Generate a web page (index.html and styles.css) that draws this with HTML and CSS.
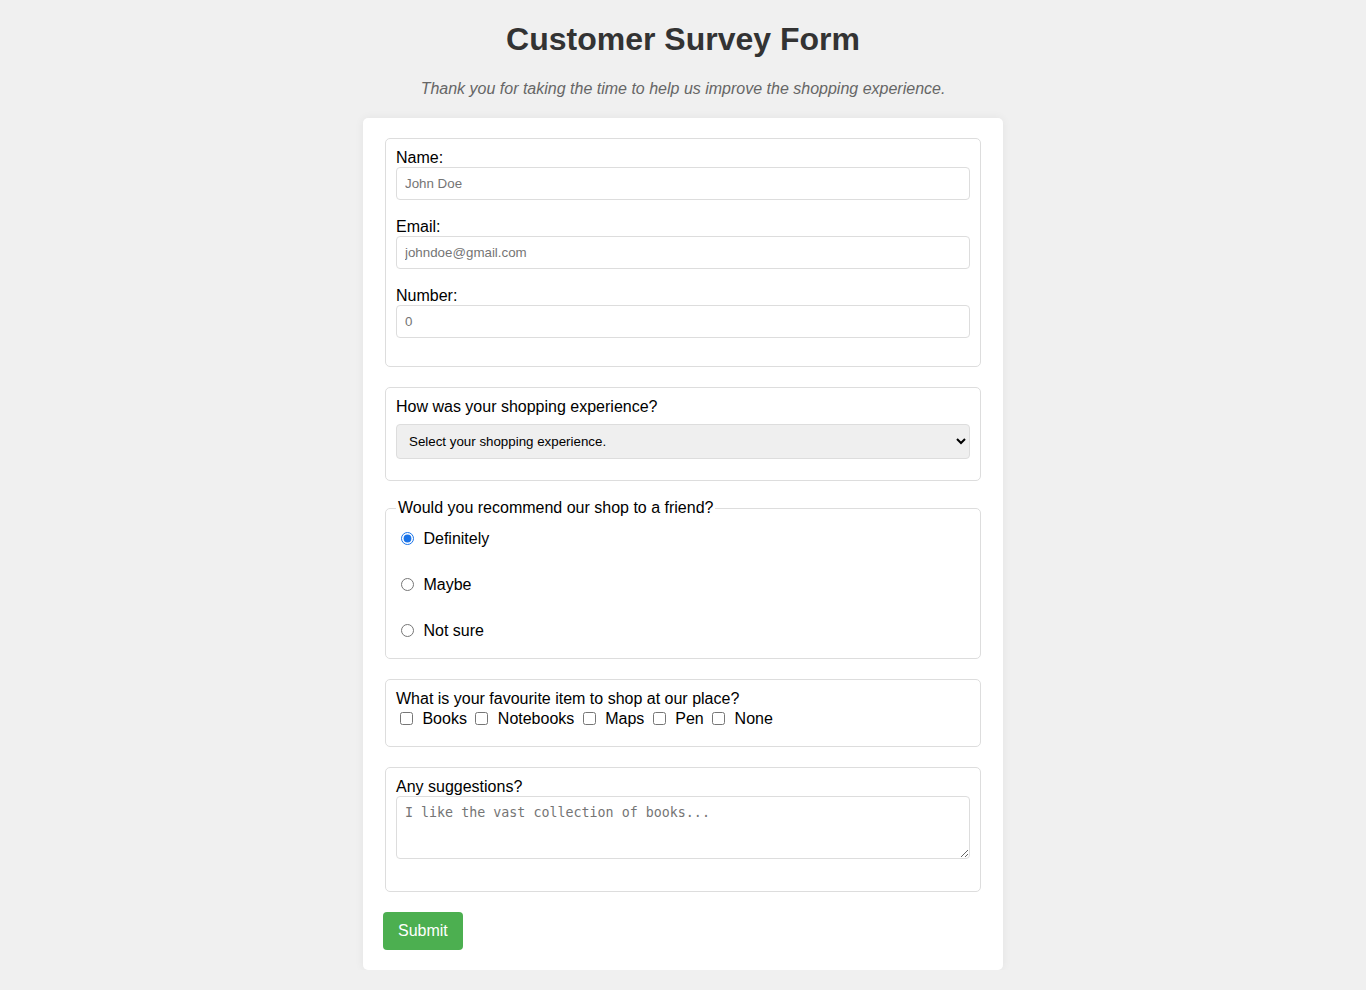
FILE: index.html
```html
<!DOCTYPE html>
<html lang="en">
<head>
<meta charset="utf-8">
<title>Customer Survey Form</title>
<link rel="stylesheet" href="styles.css">
</head>
<body>
<h1 class="title">Customer Survey Form</h1>
<p class="subtitle">Thank you for taking the time to help us improve the shopping experience.</p>
<form class="survey">
  <fieldset class="group">
    <label class="field-label" for="name">Name:</label>
    <input class="text-input" id="name" type="text" placeholder="John Doe">
    <label class="field-label" for="email">Email:</label>
    <input class="text-input" id="email" type="email" placeholder="johndoe@gmail.com">
    <label class="field-label" for="number">Number:</label>
    <input class="text-input" id="number" type="number" placeholder="0">
  </fieldset>

  <fieldset class="group">
    <label class="field-label spaced" for="exp">How was your shopping experience?</label>
    <select class="select-input" id="exp">
      <option>Select your shopping experience.</option>
    </select>
  </fieldset>

  <fieldset class="group legend-group">
    <legend class="legend">Would you recommend our shop to a friend?</legend>
    <div class="radios">
      <label class="option"><input class="radio" type="radio" name="rec" checked> Definitely</label>
      <label class="option"><input class="radio" type="radio" name="rec"> Maybe</label>
      <label class="option"><input class="radio" type="radio" name="rec"> Not sure</label>
    </div>
  </fieldset>

  <fieldset class="group checks-group">
    <div class="field-label">What is your favourite item to shop at our place?</div>
    <div class="checks"><label class="check"><input class="checkbox" type="checkbox"> Books</label> <label class="check"><input class="checkbox" type="checkbox"> Notebooks</label> <label class="check"><input class="checkbox" type="checkbox"> Maps</label> <label class="check"><input class="checkbox" type="checkbox"> Pen</label> <label class="check"><input class="checkbox" type="checkbox"> None</label></div>
  </fieldset>

  <fieldset class="group">
    <label class="field-label" for="sugg">Any suggestions?</label>
    <textarea class="textarea" id="sugg" placeholder="I like the vast collection of books..."></textarea>
  </fieldset>

  <button class="submit" type="button">Submit</button>
</form>
</body>
</html>
```

FILE: styles.css
```css
html, body {
  background: #f0f0f0;
}
body {
  margin: 0;
  font-family: "Liberation Sans", Arial, sans-serif;
  color: #000;
}
.title {
  margin: 21px 0 0;
  font-size: 32px;
  line-height: 37px;
  font-weight: bold;
  text-align: center;
  color: #333;
}
.subtitle {
  margin: 22px 0 20px;
  font-size: 16px;
  line-height: 18px;
  font-style: italic;
  text-align: center;
  color: #666;
}
.survey {
  width: 640px;
  box-sizing: border-box;
  margin: 0 auto;
  padding: 20px;
  background: #fff;
  border-radius: 5px;
  box-shadow: 0 0 10px rgba(0, 0, 0, 0.06);
}
.group {
  margin: 0 2px 20px;
  padding: 10px;
  border: 1px solid #ddd;
  border-radius: 5px;
  min-width: 0;
}
.field-label {
  display: block;
  font-size: 16px;
  line-height: 18px;
}
.field-label.spaced {
  margin-bottom: 8px;
}
.text-input {
  display: block;
  width: 100%;
  box-sizing: border-box;
  height: 33px;
  margin: 0 0 18px;
  padding: 8px;
  border: 1px solid #ddd;
  border-radius: 4px;
  font-family: "Liberation Sans", Arial, sans-serif;
  font-size: 13.333px;
  color: #333;
  background: #fff;
}
.text-input::placeholder {
  color: #757575;
}
.text-input::-webkit-outer-spin-button,
.text-input::-webkit-inner-spin-button {
  -webkit-appearance: none;
  margin: 0;
}
.text-input[type=number] {
  -moz-appearance: textfield;
}
.select-input {
  display: block;
  width: 100%;
  box-sizing: border-box;
  height: 35px;
  margin: 0 0 11px;
  padding: 0 8px;
  border: 1px solid #ddd;
  border-radius: 4px;
  background-color: #efefef;
  font-family: "Liberation Sans", Arial, sans-serif;
  font-size: 13.333px;
  color: #000;
}
.legend-group {
  margin-top: -1px;
  padding-top: 10px;
  padding-bottom: 17px;
}
.legend {
  padding: 0 2px;
  font-size: 16px;
  line-height: 16px;
}
.radios {
  display: flex;
  flex-direction: column;
  gap: 26px;
  padding-top: 3px;
}
.option {
  display: block;
  font-size: 16px;
  line-height: 20px;
}
.radio {
  margin: 3px 5px 0 5px;
  width: 13px;
  height: 13px;
  vertical-align: top;
  accent-color: #1a73e8;
}
.checks-group {
  padding-bottom: 17px;
}
.checks {
  padding-top: 1px;
  font-size: 16px;
  line-height: 20px;
}
.checkbox {
  margin: 3px 5px 0 4px;
  width: 13px;
  height: 13px;
  vertical-align: top;
}
.textarea {
  display: block;
  width: 100%;
  box-sizing: border-box;
  height: 63px;
  margin: 0 0 22px;
  padding: 8px;
  border: 1px solid #ddd;
  border-radius: 4px;
  font-family: "DejaVu Sans Mono", "Liberation Mono", monospace;
  font-size: 13.333px;
  line-height: 15px;
  resize: vertical;
}
.textarea::placeholder {
  color: #757575;
}
.submit {
  display: block;
  height: 38px;
  padding: 0 15px;
  border: none;
  border-radius: 4px;
  background: #4caf50;
  color: #fff;
  font-family: "Liberation Sans", Arial, sans-serif;
  font-size: 16px;
  cursor: pointer;
}
```
